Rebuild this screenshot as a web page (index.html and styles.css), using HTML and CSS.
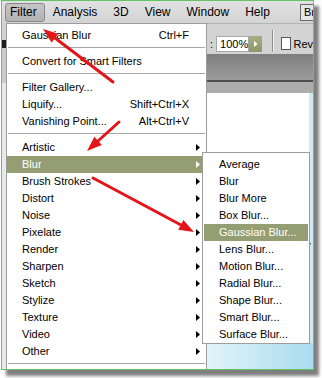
FILE: index.html
```html
<!DOCTYPE html>
<html lang="en">
<head>
    <meta charset="UTF-8">
    <meta name="viewport" content="width=device-width, initial-scale=1.0">
    <title>Filter menu - Blur</title>
    <link rel="stylesheet" href="styles.css">
</head>
<body>
    <div class="shot">
        <div class="menubar">
            <span class="mb-item first active">Filter</span>
            <span class="mb-item">Analysis</span>
            <span class="mb-item">3D</span>
            <span class="mb-item">View</span>
            <span class="mb-item">Window</span>
            <span class="mb-item">Help</span>
            <span class="mb-sep"></span>
            <span class="mb-btn">Br</span>
        </div>

        <div class="main">
            <div class="tools"></div>

            <!-- menu Filter ouvert -->
            <div class="menu">
                <div class="row">Gaussian Blur<span class="key">Ctrl+F</span></div>
                <div class="sep"></div>
                <div class="row">Convert for Smart Filters</div>
                <div class="sep"></div>
                <div class="row">Filter Gallery...</div>
                <div class="row">Liquify...<span class="key">Shift+Ctrl+X</span></div>
                <div class="row">Vanishing Point...<span class="key">Alt+Ctrl+V</span></div>
                <div class="sep"></div>
                <div class="row">Artistic<span class="tri"></span></div>
                <div class="row hl">Blur<span class="tri"></span>
                    <div class="submenu">
                        <div class="row">Average</div>
                        <div class="row">Blur</div>
                        <div class="row">Blur More</div>
                        <div class="row">Box Blur...</div>
                        <div class="row hl">Gaussian Blur...</div>
                        <div class="row">Lens Blur...</div>
                        <div class="row">Motion Blur...</div>
                        <div class="row">Radial Blur...</div>
                        <div class="row">Shape Blur...</div>
                        <div class="row">Smart Blur...</div>
                        <div class="row">Surface Blur...</div>
                    </div>
                </div>
                <div class="row">Brush Strokes<span class="tri"></span></div>
                <div class="row">Distort<span class="tri"></span></div>
                <div class="row">Noise<span class="tri"></span></div>
                <div class="row">Pixelate<span class="tri"></span></div>
                <div class="row">Render<span class="tri"></span></div>
                <div class="row">Sharpen<span class="tri"></span></div>
                <div class="row">Sketch<span class="tri"></span></div>
                <div class="row">Stylize<span class="tri"></span></div>
                <div class="row">Texture<span class="tri"></span></div>
                <div class="row">Video<span class="tri"></span></div>
                <div class="row">Other<span class="tri"></span></div>
                <div class="sep"></div>
            </div>

            <div class="work">
                <div class="options">
                    <span class="colon">:</span>
                    <span class="zoom-field">100%</span>
                    <span class="zoom-go"><span class="go-tri"></span></span>
                    <span class="opt-sep"></span>
                    <span class="check"></span>
                    <span class="opt-label">Rev</span>
                </div>
                <div class="panel"></div>
                <div class="tabs"></div>
                <div class="doc"><div class="desk"></div></div>
            </div>
        </div>
    </div>

    <!-- flèches rouges + curseur par-dessus la capture -->
    <svg class="overlay" width="322" height="378" viewBox="0 0 322 378">
        <g stroke="#e3151b" stroke-width="3" stroke-linecap="round">
            <line x1="113" y1="82" x2="55" y2="38"/>
            <line x1="119" y1="122" x2="98" y2="141"/>
            <line x1="93" y1="178" x2="181" y2="225"/>
        </g>
        <g fill="#e3151b">
            <polygon points="43,29 58.3,33.7 51.6,42.4"/>
            <polygon points="87,151 101.8,145 94.4,136.8"/>
            <polygon points="194,232 178.2,229.8 183.4,220.1"/>
        </g>
        <path d="M300.5 233.5 V248.5 L304 245 L307 252 L309 251 L306 244 L310.5 244 Z" fill="#fff" stroke="#000" stroke-width="1"/>
    </svg>
</body>
</html>
```

FILE: styles.css
```css
body {
    margin: 0;
    width: 322px;
    height: 378px;
    position: relative;
    overflow: hidden;
    background-color: #fff;
    font-family: "Liberation Sans", Arial, sans-serif;
    font-size: 11px;
    color: #000;
}

/* cadre vert de la capture */
.shot {
    margin-left: 1px;
    width: 313px;
    height: 370px;
    box-sizing: border-box;
    border: 1px solid #62c462;
    box-shadow: 5px 6px 3px rgba(0, 0, 0, 0.5);
    display: flex;
    flex-direction: column;
    overflow: hidden;
    background-color: #d4d4d4;
}

.menubar {
    height: 22px;
    flex-shrink: 0;
    display: flex;
    align-items: center;
    padding-left: 3px;
    background: linear-gradient(#e2e2e2, #d3d3d3);
    font-size: 12px;
    white-space: nowrap;
}

.mb-item {
    padding: 0 7px;
    line-height: 17px;
    border: 1px solid transparent;
    border-radius: 3px;
}

.mb-item.first {
    padding-left: 4px;
}

.mb-item.active {
    background: linear-gradient(#c6c6c6, #b2b2b2);
    border-color: #8a8a8a;
}

.mb-sep {
    width: 1px;
    height: 18px;
    margin-left: 8px;
    background-color: #9a9a9a;
    box-shadow: 1px 0 #f2f2f2;
}

.mb-btn {
    margin-left: 14px;
    padding: 0 3px;
    height: 15px;
    line-height: 15px;
    border: 1px solid #6a6a6a;
    font-size: 11px;
    background-color: #e6e6e6;
}

.main {
    flex: 1;
    min-height: 0;
    display: flex;
}

.tools {
    width: 4px;
    flex-shrink: 0;
    background: linear-gradient(#d2d2d2 0 17px, #1e1e1e 17px 25px, #cbcbcb 25px 60px, #e9e9e9 60px);
}

.menu {
    width: 201px;
    flex-shrink: 0;
    box-sizing: border-box;
    padding-top: 3px;
    background-color: #fff;
    border: 1px solid #9d9d9d;
    border-bottom: 0;
}

.row {
    position: relative;
    height: 17px;
    line-height: 17px;
    display: flex;
    align-items: center;
    padding: 0 6px 0 15px;
    white-space: nowrap;
}

.row.hl {
    background-color: #959e72;
    color: #fff;
}

.key {
    margin-left: auto;
    margin-right: 11px;
}

.tri {
    margin-left: auto;
    width: 4px;
    height: 7px;
    background-color: #000;
    clip-path: polygon(0 0, 100% 50%, 0 100%);
}

.row.hl .tri {
    background-color: #fff;
}

.sep {
    height: 1px;
    margin: 3px 1px 5px;
    background-color: #a6a6a6;
}

.submenu {
    position: absolute;
    left: 195px;
    top: -4px;
    z-index: 5;
    width: 108px;
    box-sizing: border-box;
    padding-top: 3px;
    background-color: #fff;
    border: 1px solid #9d9d9d;
    color: #000;
}

.submenu .row {
    margin: 0 1px;
    padding-left: 15px;
}

.work {
    flex: 1;
    min-width: 0;
    display: flex;
    flex-direction: column;
}

.options {
    height: 31px;
    flex-shrink: 0;
    box-sizing: border-box;
    display: flex;
    align-items: flex-end;
    padding: 0 0 2px 3px;
    border-top: 1px solid #b4b4b4;
    background-color: #d3d3d3;
    white-space: nowrap;
}

.colon {
    line-height: 16px;
    margin-right: 3px;
}

.zoom-field {
    width: 35px;
    height: 16px;
    box-sizing: border-box;
    padding-left: 3px;
    line-height: 14px;
    background-color: #fff;
    border: 1px solid #a8a8a8;
}

.zoom-go {
    width: 16px;
    height: 16px;
    display: flex;
    align-items: center;
    justify-content: center;
    background: linear-gradient(#a6ad82, #8f986a);
}

.go-tri {
    width: 4px;
    height: 7px;
    background-color: #fff;
    clip-path: polygon(0 0, 100% 50%, 0 100%);
}

.opt-sep {
    width: 1px;
    height: 22px;
    margin-left: 10px;
    background-color: #8f8f8f;
    box-shadow: 1px 0 #f0f0f0;
}

.check {
    width: 11px;
    height: 11px;
    margin: 0 0 2px 8px;
    background-color: #fff;
    border: 1px solid #4a5a6a;
}

.opt-label {
    margin-left: 2px;
    line-height: 16px;
}

.panel {
    height: 26px;
    flex-shrink: 0;
    background: linear-gradient(#7e7e7e, #9c9c9c);
    border-bottom: 2px solid #4f4f4f;
}

.tabs {
    height: 11px;
    flex-shrink: 0;
    background-color: #adadad;
}

.doc {
    flex: 1;
    display: flex;
    flex-direction: column;
    justify-content: flex-end;
    background: linear-gradient(to right, #fff calc(100% - 4px), #cfeaf2 0);
}

.desk {
    height: 26px;
    background: linear-gradient(to right, #e3f3fa, #a9dcef);
}

.overlay {
    position: absolute;
    left: 0;
    top: 0;
    pointer-events: none;
}
```
